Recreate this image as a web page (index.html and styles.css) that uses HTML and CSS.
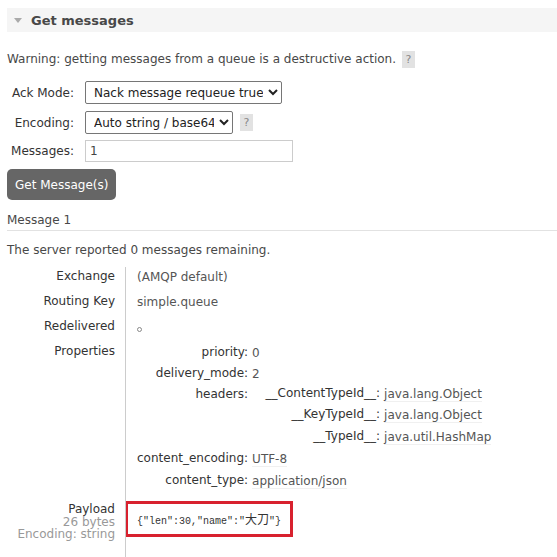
FILE: index.html
```html
<!doctype html>
<html lang="en">

<head>
  <meta charset="utf-8" />
  <title>Get messages</title>
  <link rel="stylesheet" href="styles.css">
</head>

<body>
  <div class="section">
    <h2 class="section-head"><span class="arrow"></span>Get messages</h2>

    <div class="section-body">
      <p class="warning">Warning: getting messages from a queue is a destructive action. <span class="help">?</span></p>

      <div class="form">
        <div class="form-row">
          <label class="form-label">Ack Mode:</label>
          <select class="ack-select">
            <option>Nack message requeue true</option>
          </select>
        </div>
        <div class="form-row">
          <label class="form-label">Encoding:</label>
          <select class="enc-select">
            <option>Auto string / base64</option>
          </select>
          <span class="help">?</span>
        </div>
        <div class="form-row">
          <label class="form-label">Messages:</label>
          <input class="count" value="1">
        </div>
      </div>

      <button class="get-btn">Get Message(s)</button>

      <div class="msg-title">Message 1</div>
      <p class="remaining">The server reported 0 messages remaining.</p>

      <table class="facts">
        <tr>
          <th>Exchange</th>
          <td>(AMQP default)</td>
        </tr>
        <tr>
          <th>Routing Key</th>
          <td>simple.queue</td>
        </tr>
        <tr>
          <th>Redelivered</th>
          <td><span class="circle"></span></td>
        </tr>
        <tr>
          <th>Properties</th>
          <td>
            <table class="props">
              <tr class="short"><th>priority:</th><td>0</td></tr>
              <tr class="short"><th>delivery_mode:</th><td>2</td></tr>
              <tr>
                <th>headers:</th>
                <td class="nested">
                  <table class="props headers">
                    <tr class="short"><th>__ContentTypeId__:</th><td><span class="val">java.lang.Object</span></td></tr>
                    <tr><th>__KeyTypeId__:</th><td><span class="val">java.lang.Object</span></td></tr>
                    <tr><th>__TypeId__:</th><td><span class="val">java.util.HashMap</span></td></tr>
                  </table>
                </td>
              </tr>
              <tr><th>content_encoding:</th><td><span class="val">UTF-8</span></td></tr>
              <tr><th>content_type:</th><td><span class="val">application/json</span></td></tr>
            </table>
          </td>
        </tr>
        <tr class="payload-row">
          <th>
            Payload
            <sub>26 bytes</sub>
            <sub>Encoding: string</sub>
          </th>
          <td>
            <pre class="payload">{"len":30,"name":"<span class="cjk">大刀</span>"}</pre>
          </td>
        </tr>
        <tr class="tail">
          <th></th>
          <td></td>
        </tr>
      </table>
    </div>
  </div>
</body>

</html>
```

FILE: styles.css
```css
html,
body {
  margin: 0;
  background: #fff;
}

body {
  font-family: "DejaVu Sans", Verdana, sans-serif;
  font-size: 12px;
  color: #484848;
}

.section {
  padding: 8px 0 0 7px;
}

.section-head {
  display: flex;
  align-items: center;
  height: 24px;
  margin: 0;
  background-color: #f5f5f5;
  font-size: 13px;
  font-weight: bold;
  color: #484848;
}

.arrow {
  width: 0;
  height: 0;
  margin: 1px 9px 0 7px;
  border-left: 4px solid transparent;
  border-right: 4px solid transparent;
  border-top: 5px solid #aaa;
}

.warning {
  margin: 19px 0 0 0;
  line-height: 17px;
}

.help {
  display: inline-block;
  width: 13px;
  height: 17px;
  margin-left: 2px;
  line-height: 17px;
  text-align: center;
  background-color: #e2e2e2;
  color: #888;
  font-size: 11px;
  vertical-align: middle;
}

.form {
  display: flex;
  flex-direction: column;
  margin-top: 13px;
}

.form-row {
  display: flex;
  align-items: center;
  gap: 5px;
  height: 23px;
  margin-bottom: 7px;
}

.form-row:nth-child(2) {
  margin-bottom: 6px;
}

.form-row:last-child {
  height: 21px;
  margin-bottom: 0;
}

.form-label {
  width: 67px;
  padding-right: 6px;
  text-align: right;
  font-size: 12px;
  color: #333;
}

select {
  height: 23px;
  padding: 0 2px 0 4px;
  border: 1px solid #767676;
  border-radius: 2px;
  background: #fff;
  font-family: "DejaVu Sans", Verdana, sans-serif;
  font-size: 12px;
  color: #222;
}

.ack-select {
  width: 197px;
}

.enc-select {
  width: 148px;
}

.count {
  box-sizing: border-box;
  width: 208px;
  height: 22px;
  padding: 0 4px;
  border: 1px solid #ccc;
  font-family: "DejaVu Sans", Verdana, sans-serif;
  font-size: 12px;
  color: #444;
}

.get-btn {
  display: block;
  height: 31px;
  margin-top: 8px;
  padding: 0 8px;
  border: none;
  border-radius: 5px;
  background-color: #666;
  color: #fff;
  font-family: "DejaVu Sans", Verdana, sans-serif;
  font-size: 12px;
}

.msg-title {
  margin-top: 13px;
  padding-bottom: 3px;
  border-bottom: 1px solid #e2e2e2;
  line-height: 14px;
}

.remaining {
  margin: 12px 0 10px 0;
  line-height: 14px;
}

.facts {
  border-collapse: collapse;
}

.facts th,
.facts td {
  padding: 0;
  font-weight: normal;
  vertical-align: top;
}

.facts > tbody > tr > th {
  width: 108px;
  padding: 2px 10px 9px 0;
  text-align: right;
  color: #333;
  line-height: 14px;
}

.facts > tbody > tr > td {
  padding: 3px 0 8px 11px;
  border-left: 1px solid #ccc;
  color: #555;
  line-height: 14px;
}

.circle {
  display: inline-block;
  box-sizing: border-box;
  width: 5px;
  height: 5px;
  margin-top: 7px;
  border: 1px solid #888;
  border-radius: 50%;
  vertical-align: top;
}

.props th {
  text-align: right;
  color: #333;
  padding: 2px 4px 6px 0;
  line-height: 14px;
}

.props td {
  color: #555;
  padding: 3px 0 5px 0;
  line-height: 14px;
}

.props tr.short > th {
  padding-bottom: 5px;
}

.props tr.short > td {
  padding-bottom: 4px;
}

.facts .props {
  margin-top: -2px;
  border-collapse: collapse;
}

.facts .props > tbody > tr > th:first-child {
  width: 108px;
}

.props td.nested {
  padding: 0;
}

.facts .props.headers {
  margin-top: -1px;
}

.facts .props.headers > tbody > tr > th {
  width: 128px;
}

.val {
  border-bottom: 1px solid #f0f0f0;
}

.payload-row th {
  line-height: 12px;
}

.payload-row th sub {
  display: block;
  font-size: 12px;
  line-height: 12px;
  color: #999;
  vertical-align: baseline;
}

.facts > tbody > tr.payload-row > th {
  padding-top: 1px;
}

.facts > tbody > tr.payload-row > td {
  padding: 5px 0 8px 0;
}

.payload {
  box-sizing: border-box;
  width: 168px;
  height: 36px;
  margin: -5px 0 0 -1px;
  padding: 10px 0 0 9px;
  border: 3px solid #d8212e;
  font-family: "Liberation Mono", "Noto Sans CJK SC", monospace;
  font-size: 10px;
  color: #333;
}

.cjk {
  font-family: "Noto Sans CJK SC", sans-serif;
  font-size: 12px;
  line-height: 10px;
}

.facts > tbody > tr.tail > th,
.facts > tbody > tr.tail > td {
  height: 20px;
  padding: 0;
}
```
